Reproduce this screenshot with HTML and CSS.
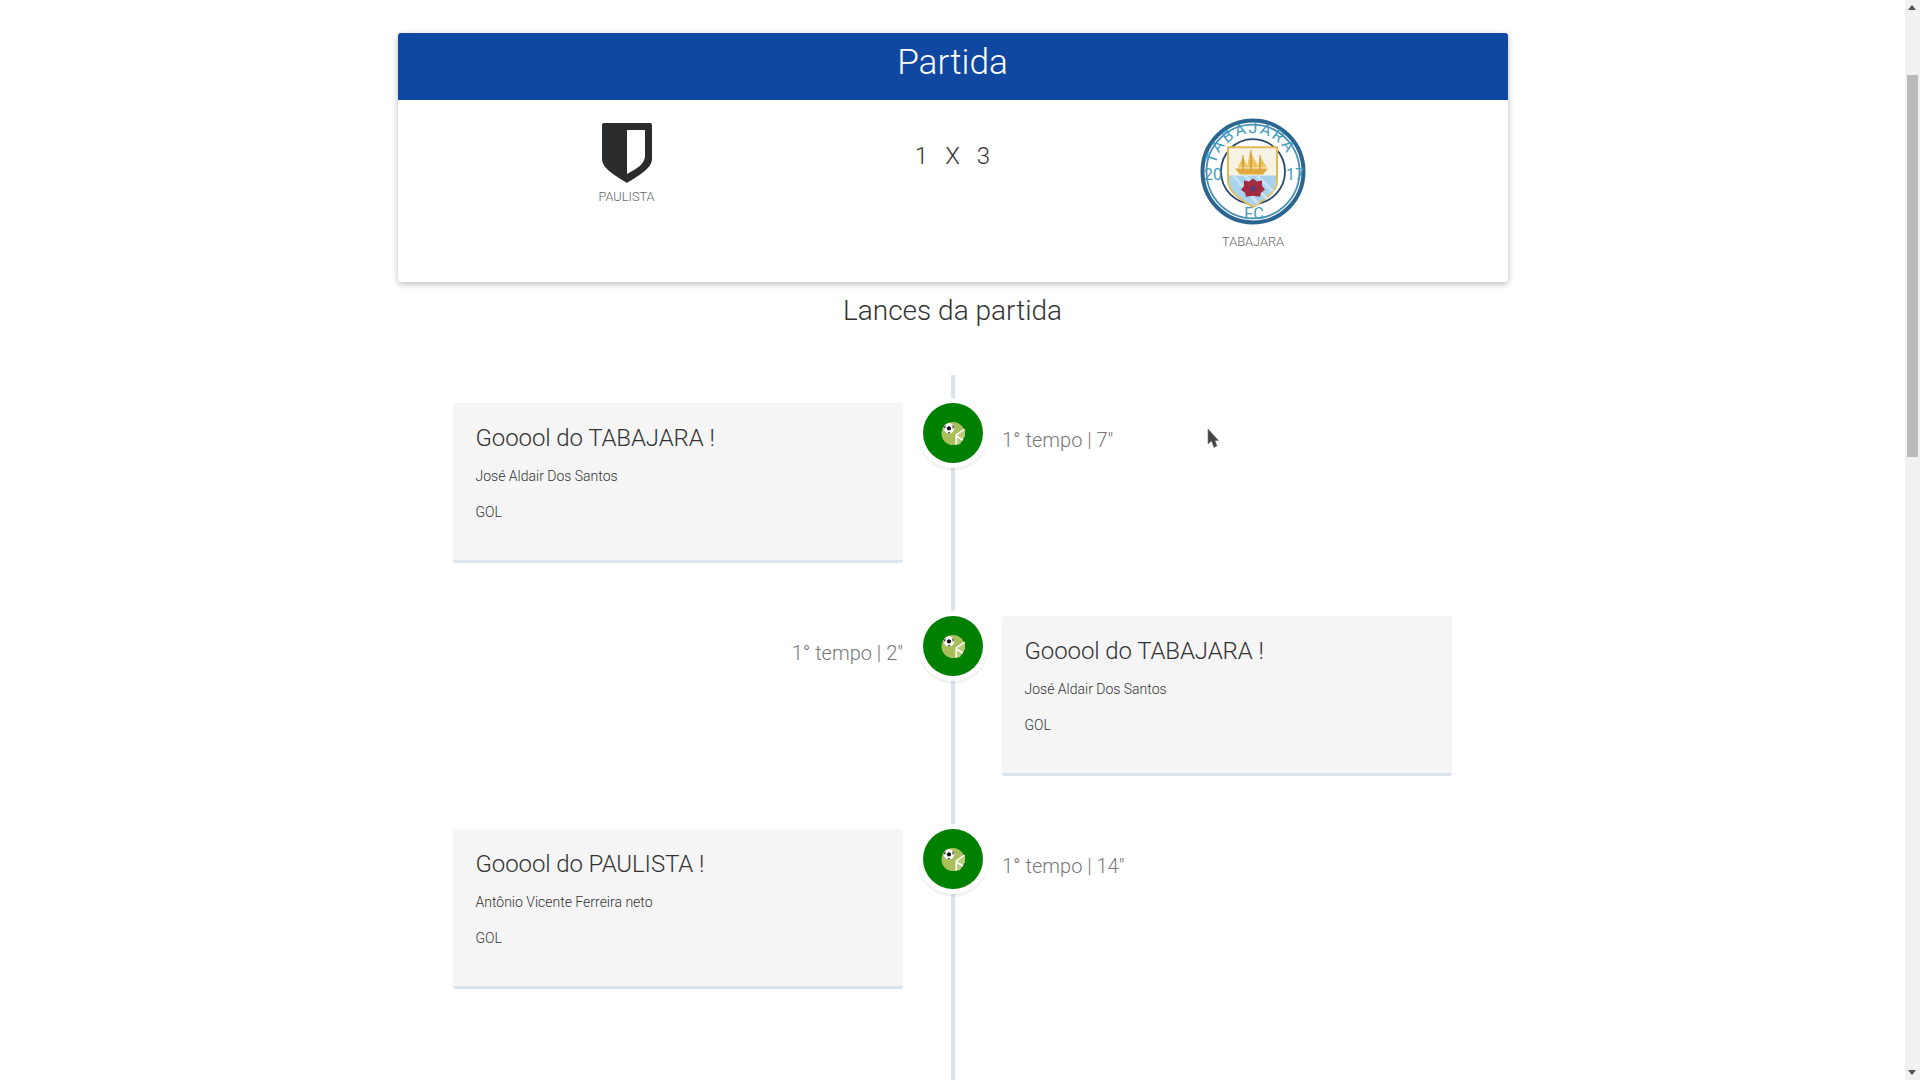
FILE: index.html
```html
<!DOCTYPE html>
<html lang="pt-BR">

<head>
    <meta charset="UTF-8">
    <meta name="viewport" content="width=device-width, initial-scale=1.0">
    <title>Partida</title>
    <link rel="stylesheet" href="styles.css">
</head>

<body>
    <div class="page">
        <main class="content">
            <section class="match_card">
                <h1 class="match_title">Partida</h1>
                <div class="match_body">
                    <div class="team team_home">
                        <svg class="shield" width="50" height="60" viewBox="0 0 50 60">
                            <path d="M2 0H48a2 2 0 0 1 2 2V36C50 46 34 54 25 60C16 54 0 46 0 36V2a2 2 0 0 1 2-2Z" fill="#2b2c2e"/>
                            <path d="M25 7H43V33C43 41 34 46 25 51Z" fill="#fff"/>
                        </svg>
                        <span class="team_name">PAULISTA</span>
                    </div>
                    <div class="score">
                        <span>1</span><span>X</span><span>3</span>
                    </div>
                    <div class="team team_away">
                        <svg class="crest" width="106" height="107" viewBox="0 0 106 106" preserveAspectRatio="none">
                            <defs>
                                <path id="arc_top" d="M15 53A38 38 0 0 1 91 53"/>
                            </defs>
                            <circle cx="53" cy="53" r="50.500" fill="#fff" stroke="#2a6690" stroke-width="4"/>
                            <circle cx="53" cy="53" r="46.500" fill="#fff" stroke="#4a90ba" stroke-width="1.800"/>
                            <circle cx="53" cy="53" r="32" fill="#fff" stroke="#27486e" stroke-width="1.800"/>
                            <text class="crest_text crest_arc"><textPath href="#arc_top" startOffset="46%" text-anchor="middle">TABAJARA</textPath></text>
                            <text class="crest_text" x="4" y="61">20</text>
                            <text class="crest_text" x="86" y="61">17</text>
                            <text class="crest_text" x="54" y="100" text-anchor="middle">FC</text>
                            <path d="M28 29H77V62C77 74 63 82 53 88C43 82 28 74 28 62Z" fill="#f6f2e4" stroke="#e3b955" stroke-width="2"/>
                            <path d="M29 57H76V62C76 73 63 81 53 87C43 81 29 73 29 62Z" fill="#a9d3ec"/>
                            <path d="M33 57L58 85M45 57L67 80M57 57L73 73" stroke="#c8e3f3" stroke-width="3"/>
                            <path d="M35 50H68L63 56H40Z" fill="#e0a93c"/>
                            <path d="M38 49L43 38L48 49ZM47 49L50 33L59 49ZM58 49L60 38L67 49Z" fill="#efc25b"/>
                            <path d="M51 32V51M43 37V51M60 37V51" stroke="#b98a2c" stroke-width="1"/>
                            <path d="M53 60L57 63L62 62L62 67L65 71L61 74L60 78L53 77L46 78L45 74L41 71L44 67L44 62L49 63Z" fill="#a32b3f"/>
                            <circle cx="53" cy="70" r="3" fill="#5c3a7a"/>
                        </svg>
                        <span class="team_name">TABAJARA</span>
                    </div>
                </div>
            </section>

            <h2 class="plays_title">Lances da partida</h2>

            <ul class="timeline">
                <li class="play">
                    <div class="play_card">
                        <h3>Gooool do TABAJARA !</h3>
                        <p>José Aldair Dos Santos</p>
                        <p>GOL</p>
                    </div>
                    <div class="play_icon"><svg width="24" height="24" viewBox="0 0 24 24"><use href="#goal_icon"/></svg></div>
                    <div class="play_time">1° tempo | 7"</div>
                </li>
                <li class="play">
                    <div class="play_time play_time_left">1° tempo | 2"</div>
                    <div class="play_icon"><svg width="24" height="24" viewBox="0 0 24 24"><use href="#goal_icon"/></svg></div>
                    <div class="play_card">
                        <h3>Gooool do TABAJARA !</h3>
                        <p>José Aldair Dos Santos</p>
                        <p>GOL</p>
                    </div>
                </li>
                <li class="play">
                    <div class="play_card">
                        <h3>Gooool do PAULISTA !</h3>
                        <p>Antônio Vicente Ferreira neto</p>
                        <p>GOL</p>
                    </div>
                    <div class="play_icon"><svg width="24" height="24" viewBox="0 0 24 24"><use href="#goal_icon"/></svg></div>
                    <div class="play_time">1° tempo | 14"</div>
                </li>
            </ul>
        </main>

        <div class="scrollbar">
            <div class="scroll_arrow scroll_up"></div>
            <div class="scroll_thumb"></div>
            <div class="scroll_arrow scroll_down"></div>
        </div>
    </div>

    <svg class="cursor" width="12" height="21" viewBox="0 0 12 21">
        <path d="M1 1V16L4.500 13L7 19.500L10 18L8 12.500H11.500Z" fill="#444" stroke="#777" stroke-width=".6"/>
    </svg>

    <svg class="sprites" width="0" height="0">
        <symbol id="goal_icon" viewBox="0 0 24 24">
            <circle cx="12" cy="12.500" r="11.500" fill="#a8bf5c"/>
            <path d="M14 24L15 14L24 8V15L19 23Z" fill="#bcce7c"/>
            <path d="M23.500 8L15.200 14V23.500M15.200 15L22 19" stroke="#fff" stroke-width="1.500" fill="none"/>
            <circle cx="8" cy="7.300" r="5.300" fill="#fff"/>
            <path d="M8 5L10.300 6.700L9.500 9.200H6.500L5.700 6.700Z" fill="#111"/>
            <path d="M4.500 3.500L3 6.200L4.200 8.200ZM11.500 3.500L13 6L11.800 8.200ZM6.500 12.200H9.500L8 10.700Z" fill="#111"/>
        </symbol>
    </svg>
</body>

</html>
```
FILE: styles.css
```css
* {
    margin: 0;
    padding: 0;
    box-sizing: border-box;
    list-style: none;
}

body {
    font-family: Roboto, "Liberation Sans", sans-serif;
    font-weight: 300;
    color: #333;
    background-color: #fff;
    overflow: hidden;
}

.page {
    display: flex;
    height: 100vh;
    overflow: hidden;
}

.content {
    flex: 1;
    min-width: 0;
    padding-top: 33px;
}

/* match card */
.match_card {
    width: 1110px;
    height: 249px;
    margin: 0 auto;
    border-radius: 3px;
    overflow: hidden;
    background-color: #fff;
    box-shadow: 0 2px 5px 0 rgba(0, 0, 0, .16), 0 2px 10px 0 rgba(0, 0, 0, .12);
}
.match_title {
    height: 67px;
    font-size: 35.2px;
    font-weight: 300;
    line-height: 58px;
    text-align: center;
    color: #fff;
    background-color: #0f47a1;
}
.match_body {
    display: grid;
    grid-template-columns: 458px 194px 407px;
    align-items: start;
}
.team {
    display: flex;
    flex-direction: column;
    align-items: center;
}
.team_home {
    padding-top: 23px;
}
.team_away {
    padding-top: 18px;
}
.team_name {
    font-size: 12.8px;
    font-weight: 300;
    line-height: 16px;
    color: #666;
}
.team_home .team_name {
    margin-top: 6px;
}
.team_away .team_name {
    margin-top: 9px;
}
.score {
    display: flex;
    justify-content: center;
    gap: 17px;
    padding-top: 42px;
    font-size: 24px;
    line-height: 28px;
}

.crest_text {
    font-family: Roboto, sans-serif;
    font-size: 16px;
    font-weight: 400;
    fill: #3f9dc0;
}
.crest_arc {
    font-size: 16px;
    letter-spacing: 2px;
}

.plays_title {
    margin-top: 11px;
    font-size: 28px;
    font-weight: 300;
    line-height: 36px;
    text-align: center;
}

/* timeline */
.timeline {
    position: relative;
    width: 999px;
    height: 800px;
    margin: 46px auto 0;
    padding-top: 28px;
}
.timeline::before {
    content: "";
    position: absolute;
    top: 0;
    bottom: 0;
    left: 498px;
    width: 4px;
    background-color: #d9e4ee;
}
.play {
    position: relative;
    display: grid;
    grid-template-columns: 450px 99px 450px;
    height: 160px;
    margin-bottom: 53px;
}
.play_card {
    height: 160px;
    padding: 21px 22.5px;
    border-bottom: 3px solid #d9e4ee;
    border-radius: 3px;
    background-color: #f5f5f5;
}
.play_card h3 {
    margin-bottom: 14px;
    font-size: 24px;
    font-weight: 300;
    letter-spacing: -.1px;
    line-height: 28px;
}
.play_card p {
    margin-bottom: 16px;
    font-size: 14px;
    line-height: 20px;
}
.play_icon {
    display: flex;
    align-items: center;
    justify-content: center;
    width: 60px;
    height: 60px;
    margin: 0 auto;
    border-radius: 50%;
    background-color: #008000;
    box-shadow: 0 0 0 5px #fff, 0 3px 0 5px rgba(0, 0, 0, .05);
}
.play_time {
    padding-top: 22px;
    font-size: 20px;
    line-height: 30px;
    color: #777;
}
.play_time_left {
    text-align: right;
}

/* scrollbar drawn by hand */
.scrollbar {
    flex: 0 0 15px;
    position: relative;
    background-color: #f1f1f1;
}
.scroll_thumb {
    position: absolute;
    top: 75px;
    left: 2px;
    width: 11px;
    height: 382px;
    background-color: #bababa;
}
.scroll_arrow {
    position: absolute;
    left: 3px;
    width: 0;
    height: 0;
    border-left: 4px solid transparent;
    border-right: 4px solid transparent;
}
.scroll_up {
    top: 5px;
    border-bottom: 5px solid #505050;
}
.scroll_down {
    bottom: 5px;
    border-top: 5px solid #505050;
}

.cursor {
    position: absolute;
    top: 428px;
    left: 1207px;
}
.sprites {
    position: absolute;
}
```
